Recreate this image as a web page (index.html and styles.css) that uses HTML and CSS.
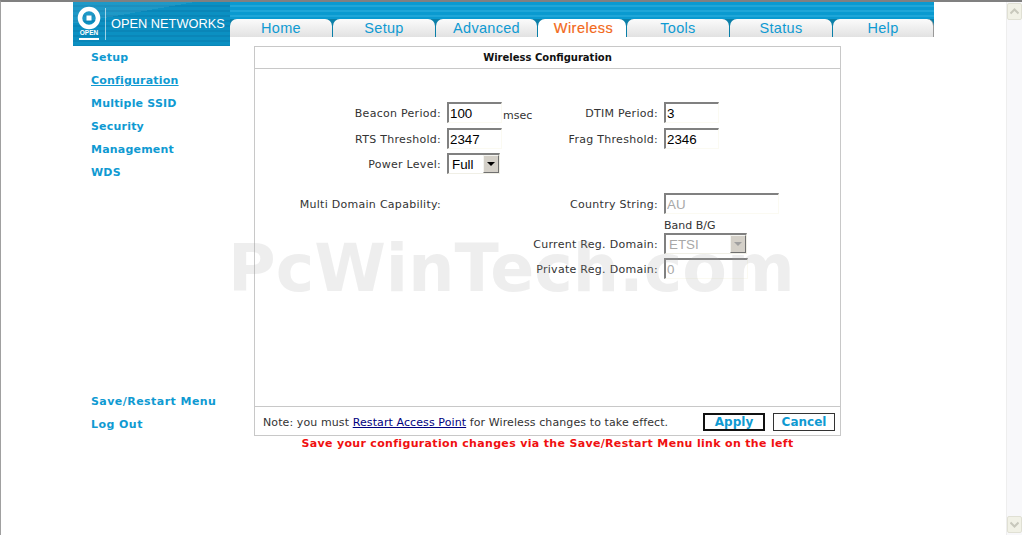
FILE: index.html
```html
<!DOCTYPE html>
<html lang="en">
<head>
    <meta charset="UTF-8">
    <title>Wireless Configuration</title>
    <link rel="stylesheet" href="styles.css">
</head>
<body>
    <div class="page">
        <div id="header">
            <div class="logo">
                <svg class="logo-mark" width="26" height="36" viewBox="0 0 26 36">
                    <circle cx="13" cy="12" r="9" fill="none" stroke="#fff" stroke-width="4.500"/>
                    <rect x="10.500" y="9.500" width="5" height="5" fill="#fff"/>
                    <text x="13" y="29" text-anchor="middle" class="logo-small">OPEN</text>
                    <rect x="3" y="32" width="20" height="2" fill="#fff"/>
                </svg>
                <span class="logo-rule"></span>
                <span class="logo-name">OPEN NETWORKS</span>
            </div>
            <nav class="tabs">
                <a class="tab tab-home" href="#">Home</a>
                <a class="tab tab-setup" href="#">Setup</a>
                <a class="tab tab-advanced" href="#">Advanced</a>
                <a class="tab tab-wireless active" href="#">Wireless</a>
                <a class="tab tab-tools" href="#">Tools</a>
                <a class="tab tab-status" href="#">Status</a>
                <a class="tab tab-help" href="#">Help</a>
            </nav>
        </div>

        <div class="main">
            <div class="sidebar">
                <div class="side-group">
                    <a href="#">Setup</a>
                    <a class="current" href="#">Configuration</a>
                    <a href="#">Multiple SSID</a>
                    <a href="#">Security</a>
                    <a href="#">Management</a>
                    <a href="#">WDS</a>
                </div>
                <div class="side-group side-bottom">
                    <a href="#">Save/Restart Menu</a>
                    <a href="#">Log Out</a>
                </div>
            </div>

            <div class="content">
                <div class="panel">
                    <h1 class="panel-title">Wireless Configuration</h1>
                    <div class="panel-body">
                        <form class="config-form">
                            <label>Beacon Period:</label>
                            <div class="field"><input class="short" type="text" value="100"><span class="unit">msec</span></div>
                            <label>DTIM Period:</label>
                            <div class="field"><input class="short" type="text" value="3"></div>

                            <label>RTS Threshold:</label>
                            <div class="field"><input class="short" type="text" value="2347"></div>
                            <label>Frag Threshold:</label>
                            <div class="field"><input class="short" type="text" value="2346"></div>

                            <label>Power Level:</label>
                            <div class="field">
                                <div class="fake-select power"><span>Full</span><i class="arrow"></i></div>
                            </div>
                            <span></span>
                            <span></span>

                            <label>Multi Domain Capability:</label>
                            <span></span>
                            <label>Country String:</label>
                            <div class="field"><input class="long" type="text" value="AU" disabled></div>

                            <span></span>
                            <span></span>
                            <span></span>
                            <div class="band">Band B/G</div>

                            <span></span>
                            <span></span>
                            <label>Current Reg. Domain:</label>
                            <div class="field">
                                <div class="fake-select domain disabled"><span>ETSI</span><i class="arrow"></i></div>
                            </div>

                            <span></span>
                            <span></span>
                            <label>Private Reg. Domain:</label>
                            <div class="field"><input class="private" type="text" value="0" disabled></div>
                        </form>
                    </div>
                    <div class="panel-foot">
                        <p class="note">Note: you must <a href="#">Restart Access Point</a> for Wireless changes to take effect.</p>
                        <button class="btn btn-default" type="button">Apply</button>
                        <button class="btn" type="button">Cancel</button>
                    </div>
                </div>
                <p class="warning">Save your configuration changes via the Save/Restart Menu link on the left</p>
            </div>
        </div>
    </div>

    <div class="scrollbar">
        <div class="scroll-btn"><svg width="9" height="7" viewBox="0 0 9 7"><path d="M0.500 5.500 L4.500 1.500 L8.500 5.500" fill="none" stroke="#c8c8bc" stroke-width="2"/></svg></div>
        <div class="scroll-btn"><svg width="9" height="7" viewBox="0 0 9 7"><path d="M0.500 1.500 L4.500 5.500 L8.500 1.500" fill="none" stroke="#c8c8bc" stroke-width="2"/></svg></div>
    </div>

    <div class="watermark">PcWinTech.com</div>
</body>
</html>
```

FILE: styles.css
```css
:root {
    --blue: #0f9ad2;
    --panel-line: #c8c8c8;
}

html, body {
    height: 100%;
}

body {
    margin: 0;
    height: 535px;
    box-sizing: border-box;
    overflow: hidden;
    display: flex;
    background: #fff;
    border-top: 2px solid #808080;
    border-left: 1px solid #a0a0a0;
    font-family: "DejaVu Sans", sans-serif;
    font-size: 11px;
    color: #333;
}

.page {
    flex: 1;
    padding-left: 72px;
}

/* header */

#header {
    display: flex;
    align-items: flex-start;
    width: 861px;
    height: 44px;
}

.logo {
    width: 157px;
    height: 44px;
    flex: none;
    box-sizing: border-box;
    display: flex;
    align-items: flex-start;
    padding: 4px 0 0 3px;
    background:
        linear-gradient(170deg, rgba(255, 255, 255, 0.08) 0 30%, transparent 30% 100%),
        repeating-linear-gradient(180deg, #0b90c2 0 3px, #0a86b8 3px 5px);
}

.logo-small {
    font-family: "Liberation Sans", sans-serif;
    font-size: 6.500px;
    font-weight: bold;
    fill: #fff;
}

.logo-rule {
    width: 1px;
    height: 32px;
    margin: 2px 0 0 3px;
    background: rgba(255, 255, 255, 0.6);
}

.logo-name {
    margin: 10px 0 0 5px;
    font-family: "Liberation Sans", sans-serif;
    font-size: 12.800px;
    color: #fff;
    white-space: nowrap;
}

.tabs {
    flex: 1;
    height: 35px;
    box-sizing: border-box;
    display: flex;
    align-items: flex-end;
    background:
        linear-gradient(#0a7fa8, #0a7fa8) bottom / 100% 18px no-repeat,
        repeating-linear-gradient(180deg, #0a9ad0 0 3px, #1fa6d8 3px 5px);
}

.tab {
    height: 18px;
    box-sizing: border-box;
    margin-right: 1px;
    padding-top: 1px;
    text-align: center;
    font-family: "Liberation Sans", sans-serif;
    font-size: 14.500px;
    line-height: 16px;
    letter-spacing: 0.300px;
    color: var(--blue);
    text-decoration: none;
    border-radius: 7px 7px 0 0;
    background: linear-gradient(180deg, #fbfbfb 0%, #e2e2e2 100%);
}

.tab.active {
    padding-left: 3px;
    color: #f26a1b;
    letter-spacing: 0.500px;
    -webkit-text-stroke: 0.200px #f26a1b;
    background: #fff;
}

.tab-home { width: 102px; }
.tab-setup { width: 102px; }
.tab-advanced { width: 101px; }
.tab-wireless { width: 88px; }
.tab-tools { width: 102px; }
.tab-status { width: 102px; }
.tab-help { flex: 1; margin-right: 0; border-right: 1px solid #999; }

/* sidebar + content */

.main {
    display: flex;
}

.sidebar {
    width: 181px;
    height: 390px;
    flex: none;
    box-sizing: border-box;
    padding: 0 0 0 18px;
    display: flex;
    flex-direction: column;
    justify-content: space-between;
}

.side-group {
    display: flex;
    flex-direction: column;
    align-items: flex-start;
}

.side-group a {
    height: 23px;
    line-height: 23px;
    font-size: 11px;
    font-weight: bold;
    letter-spacing: 0.200px;
    color: var(--blue);
    text-decoration: none;
}

.side-group a.current {
    height: 16px;
    line-height: 16px;
    margin: 4px 0 3px;
    text-decoration: underline;
}

.side-bottom a {
    letter-spacing: 0.450px;
}

.content {
    width: 587px;
}

.panel {
    box-sizing: border-box;
    height: 390px;
    display: flex;
    flex-direction: column;
    border: 1px solid var(--panel-line);
}

.panel-title {
    margin: 0;
    height: 21px;
    line-height: 21px;
    flex: none;
    text-align: center;
    font-size: 10px;
    font-weight: bold;
    color: #111;
    border-bottom: 1px solid var(--panel-line);
}

.panel-body {
    flex: 1;
    padding-top: 33px;
}

.config-form {
    display: grid;
    grid-template-columns: 186px 116px 101px 1fr;
    grid-template-rows: 26px 25px 40px 20px 20px 25px 21px;
    align-items: start;
}

.config-form label {
    justify-self: end;
    padding-top: 1px;
    line-height: 21px;
    letter-spacing: 0.280px;
    white-space: nowrap;
}

.field {
    display: flex;
    align-items: center;
    padding-left: 6px;
}

.field input {
    box-sizing: border-box;
    height: 21px;
    padding: 0 1px;
    font-family: "Liberation Sans", sans-serif;
    font-size: 13.330px;
    color: #000;
    background: #fff;
    border-style: solid;
    border-color: #808080 #fbfaf2 #fbfaf2 #808080;
    border-width: 2px 1px 1px 2px;
    outline: none;
}

.field input:disabled {
    color: #a8a8a8;
    background: transparent;
}

.short { width: 55px; }
.long { width: 115px; }
.private { width: 84px; }

.unit {
    margin: 5px 0 0 1px;
}

.band {
    padding-left: 6px;
    line-height: 26px;
    white-space: nowrap;
}

.fake-select {
    box-sizing: border-box;
    height: 21px;
    display: flex;
    justify-content: space-between;
    align-items: center;
    padding: 0 0 0 3px;
    font-family: "Liberation Sans", sans-serif;
    font-size: 13.330px;
    color: #000;
    border-style: solid;
    border-color: #808080 #f0efe6 #f0efe6 #808080;
    border-width: 2px 1px 1px 2px;
}

.fake-select.power { width: 53px; }
.fake-select.domain { width: 83px; }
.fake-select.disabled { color: #a8a8a8; }

.arrow {
    position: relative;
    width: 16px;
    height: 18px;
    box-sizing: border-box;
    background: #d4d0c8;
    border: 1px solid;
    border-color: #f4f4f0 #707070 #707070 #f4f4f0;
}

.arrow::after {
    content: "";
    position: absolute;
    left: 3px;
    top: 6px;
    border: 4px solid transparent;
    border-top-color: #000;
    border-bottom-width: 0;
}

.disabled .arrow::after {
    border-top-color: #a0a0a0;
}

.panel-foot {
    flex: none;
    height: 29px;
    box-sizing: border-box;
    display: flex;
    align-items: center;
    padding: 2px 5px 0 8px;
    border-top: 1px solid var(--panel-line);
}

.note {
    flex: 1;
    margin: 0;
    font-size: 11px;
    letter-spacing: 0.100px;
    white-space: nowrap;
}

.note a {
    color: #000080;
}

.btn {
    box-sizing: border-box;
    width: 62px;
    height: 18px;
    padding: 0;
    margin-left: 8px;
    font-family: "DejaVu Sans", sans-serif;
    font-size: 12px;
    font-weight: bold;
    color: var(--blue);
    background: #fff;
    border: 1px solid #333;
}

.btn-default {
    border: 2px solid #111;
}

.warning {
    margin: 1px 0 0;
    text-align: center;
    font-size: 11px;
    font-weight: bold;
    letter-spacing: 0.330px;
    color: #f01010;
}

/* scrollbar and stamp */

.scrollbar {
    width: 16px;
    flex: none;
    display: flex;
    flex-direction: column;
    justify-content: space-between;
    padding: 1px 0 2px;
    box-sizing: border-box;
    background: #f8f8fa;
    border-left: 1px solid #eeeeee;
}

.scroll-btn {
    height: 15px;
    display: flex;
    align-items: center;
    justify-content: center;
    background: #f1f1e6;
    border: 1px solid #e0e0d4;
    border-radius: 2px;
}

.watermark {
    position: absolute;
    left: 228px;
    top: 231px;
    font-family: "DejaVu Sans", sans-serif;
    font-size: 65px;
    font-weight: bold;
    color: rgba(160, 160, 160, 0.18);
    white-space: nowrap;
    pointer-events: none;
}
```
